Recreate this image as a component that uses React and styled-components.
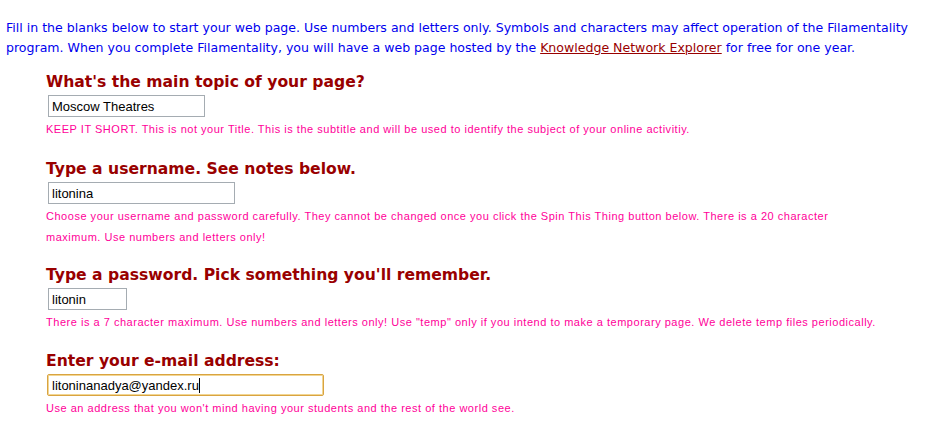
import React from "react";
import styled, { createGlobalStyle } from "styled-components";

const Global = createGlobalStyle`
  html, body { margin: 0; padding: 0; background: #ffffff; }
  body { width: 941px; height: 422px; overflow: hidden; }
`;

const Page = styled.div`
  padding: 18px 0 0 6px;
`;

const Intro = styled.p`
  margin: 0;
  font-family: "DejaVu Sans", Verdana, sans-serif;
  font-size: 12.55px;
  line-height: 20px;
  color: #0000ee;
  width: 925px;
`;

const Link = styled.a`
  color: #990000;
  text-decoration: underline;
`;

const Form = styled.div`
  display: flex;
  flex-direction: column;
  padding-left: 40px;
  padding-top: 12px;
`;

const Field = styled.div`
  display: flex;
  flex-direction: column;
  align-items: flex-start;
  margin-bottom: ${(p) => p.$gap || 16}px;
`;

const Label = styled.h3`
  margin: 0;
  font-family: "DejaVu Sans", Verdana, sans-serif;
  font-weight: bold;
  font-size: 15.6px;
  line-height: 24px;
  color: #990000;
`;

const Input = styled.input`
  box-sizing: border-box;
  margin: 1px 0 0 2px;
  width: ${(p) => p.$w}px;
  height: 22px;
  padding: 1px 3px;
  font-family: "Liberation Sans", Arial, sans-serif;
  font-size: 13px;
  color: #000;
  background: #fff;
  border: 1px solid #a5acb2;
  outline: none;
  border-radius: 0;
`;

const Note = styled.div`
  margin-top: 2px;
  font-family: "Liberation Sans", Arial, sans-serif;
  font-size: 11px;
  letter-spacing: 0.52px;
  line-height: 21px;
  color: #ff0099;
  width: ${(p) => p.$w || 880}px;
`;

const Caret = styled.span`
  display: inline-block;
  width: 1px;
  height: 15px;
  background: #000;
  vertical-align: -3px;
`;

const FocusBox = styled.div`
  box-sizing: border-box;
  margin: 1px 0 0 1px;
  width: 277px;
  height: 22px;
  padding: 3px 3px 0 4px;
  font-family: "Liberation Sans", Arial, sans-serif;
  font-size: 13px;
  line-height: 15px;
  color: #000;
  background: #fff;
  border: 1px solid #d9a441;
  box-shadow: inset 0 0 0 1px #f2d693;
  border-radius: 2px;
`;

export default function App() {
  return (
    <>
      <Global />
      <Page>
        <Intro>
          Fill in the blanks below to start your web page. Use numbers and letters only. Symbols and characters may affect operation of the Filamentality program. When you complete Filamentality, you will have a web page hosted by the{" "}
          <Link href="#">Knowledge Network Explorer</Link> for free for one year.
        </Intro>
        <Form>
          <Field $gap={17}>
            <Label>What's the main topic of your page?</Label>
            <Input $w={157} defaultValue="Moscow Theatres" />
            <Note>
              KEEP IT SHORT. This is not your Title. This is the subtitle and will be used to identify the subject of your online activitiy.
            </Note>
          </Field>
          <Field $gap={15}>
            <Label>Type a username. See notes below.</Label>
            <Input $w={187} defaultValue="litonina" />
            <Note $w={812}>
              Choose your username and password carefully. They cannot be changed once you click the Spin This Thing button below. There is a 20 character maximum. Use numbers and letters only!
            </Note>
          </Field>
          <Field>
            <Label>Type a password. Pick something you'll remember.</Label>
            <Input $w={79} defaultValue="litonin" />
            <Note>
              There is a 7 character maximum. Use numbers and letters only! Use "temp" only if you intend to make a temporary page. We delete temp files periodically.
            </Note>
          </Field>
          <Field>
            <Label>Enter your e-mail address:</Label>
            <FocusBox>
              litoninanadya@yandex.ru<Caret />
            </FocusBox>
            <Note>Use an address that you won't mind having your students and the rest of the world see.</Note>
          </Field>
        </Form>
      </Page>
    </>
  );
}
